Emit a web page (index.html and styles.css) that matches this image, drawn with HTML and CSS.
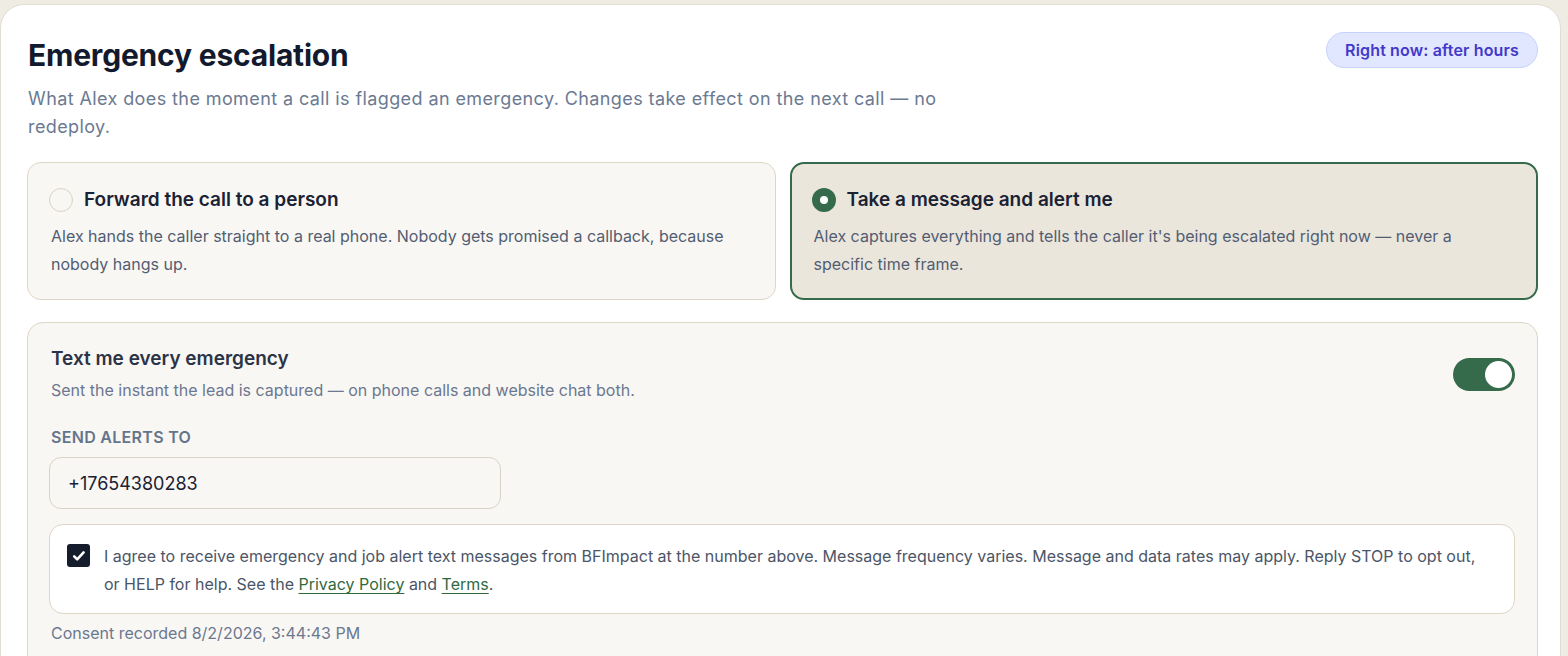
FILE: index.html
```html
<!DOCTYPE html>
<html>
<head>
    <meta charset="UTF-8">
    <link rel="stylesheet" href="styles.css">
</head>
<body>
<div class="card">
    <div class="card-head">
        <div>
            <h1>Emergency escalation</h1>
            <p class="lead">What Alex does the moment a call is flagged an emergency. Changes take effect on the next call — no redeploy.</p>
        </div>
        <span class="badge">Right now: after hours</span>
    </div>

    <div class="options">
        <div class="option">
            <div class="option-title"><span class="radio"></span>Forward the call to a person</div>
            <p>Alex hands the caller straight to a real phone. Nobody gets promised a callback, because nobody hangs up.</p>
        </div>
        <div class="option selected">
            <div class="option-title"><span class="radio"></span>Take a message and alert me</div>
            <p>Alex captures everything and tells the caller it's being escalated right now — never a specific time frame.</p>
        </div>
    </div>

    <div class="panel">
        <div class="panel-head">
            <div>
                <div class="panel-title">Text me every emergency</div>
                <div class="panel-sub">Sent the instant the lead is captured — on phone calls and website chat both.</div>
            </div>
            <span class="toggle on"><span class="knob"></span></span>
        </div>

        <label class="field-label">Send alerts to</label>
        <div class="input">+17654380283</div>

        <div class="consent">
            <span class="check">
                <svg width="16" height="16" viewBox="0 0 16 16"><path d="M3.2 8.4l3 3 6.4-7" fill="none" stroke="#fff" stroke-width="2.6" stroke-linecap="round" stroke-linejoin="round"/></svg>
            </span>
            <p>I agree to receive emergency and job alert text messages from BFImpact at the number above. Message frequency varies. Message and data rates may apply. Reply STOP to opt out, or HELP for help. See the <a href="#">Privacy Policy</a> and <a href="#">Terms</a>.</p>
        </div>
        <div class="recorded">Consent recorded 8/2/2026, 3:44:43 PM</div>
    </div>
</div>
</body>
</html>
```

FILE: styles.css
```css
* {
    box-sizing: border-box;
    font-family: Inter, "Noto Sans", sans-serif;
}

body {
    margin: 0;
    padding-top: 4px;
    background-color: #efece4;
    overflow: hidden;
}

.card {
    width: 1561px;
    height: 700px;
    background-color: #ffffff;
    border: 1px solid #e2ddd1;
    border-radius: 24px;
    padding: 28px 22px 0 26px;
}

.card-head {
    display: flex;
    justify-content: space-between;
    align-items: flex-start;
}

h1 {
    margin: 0;
    font-size: 30px;
    line-height: 44px;
    font-weight: 700;
    letter-spacing: -0.2px;
    color: #131a2d;
    padding-left: 1px;
}

.lead {
    margin: 8px 0 0 0;
    max-width: 930px;
    font-size: 18px;
    line-height: 28px;
    letter-spacing: 0.4px;
    color: #6b7a92;
    padding-left: 1px;
}

.badge {
    margin-top: -1px;
    height: 36px;
    padding: 0 18px;
    display: flex;
    align-items: center;
    border-radius: 18px;
    background-color: #e0e7ff;
    border: 1px solid #c7d2fe;
    color: #4338ca;
    font-size: 16px;
    font-weight: 600;
    letter-spacing: 0.15px;
}

.options {
    margin-top: 21px;
    display: grid;
    grid-template-columns: 1fr 1fr;
    gap: 14px;
}

.option {
    background-color: #f9f7f3;
    border: 1px solid #ddd6c6;
    border-radius: 14px;
    padding: 23px 21px 21px 21px;
}

.option.selected {
    background-color: #ebe6dc;
    border: 2px solid #356b4a;
    padding: 22px 28px 20px 20px;
}

.option-title {
    display: flex;
    align-items: center;
    gap: 11px;
    font-size: 19px;
    line-height: 28px;
    font-weight: 600;
    color: #1a2233;
}

.radio {
    width: 24px;
    height: 24px;
    border-radius: 50%;
    border: 1px solid #d9d2c2;
    background-color: #f9f7f3;
    flex-shrink: 0;
}

.selected .radio {
    border: 8px solid #356b4a;
    background-color: #ffffff;
}

.option p {
    margin: 8px 0 0 2px;
    font-size: 16px;
    line-height: 28px;
    color: #525d72;
}

.panel {
    margin-top: 22px;
    background-color: #f9f7f3;
    border: 1px solid #ddd6c6;
    border-radius: 16px;
    padding: 22px 22px 40px 21px;
}

.panel-head {
    display: flex;
    justify-content: space-between;
    align-items: center;
    padding-left: 2px;
}

.panel-title {
    font-size: 19px;
    line-height: 28px;
    font-weight: 600;
    color: #2b3446;
}

.panel-sub {
    margin-top: 3px;
    font-size: 16px;
    line-height: 28px;
    color: #6b7890;
}

.toggle {
    width: 62px;
    height: 33px;
    border-radius: 17px;
    background-color: #356b4a;
    padding: 3px;
    display: flex;
}

.toggle.on {
    justify-content: flex-end;
}

.knob {
    width: 27px;
    height: 27px;
    border-radius: 50%;
    background-color: #ffffff;
}

.field-label {
    display: block;
    margin-top: 21px;
    padding-left: 2px;
    font-size: 16px;
    line-height: 24px;
    font-weight: 600;
    text-transform: uppercase;
    letter-spacing: 0.3px;
    color: #64748b;
}

.input {
    margin-top: 8px;
    width: 452px;
    height: 52px;
    border: 1px solid #d9d3c4;
    border-radius: 12px;
    background-color: #f9f7f3;
    padding-left: 18px;
    display: flex;
    align-items: center;
    font-size: 18px;
    color: #1a2233;
}

.consent {
    margin-top: 15px;
    background-color: #ffffff;
    border: 1px solid #ddd6c6;
    border-radius: 14px;
    padding: 17px 30px 15px 17px;
    display: flex;
    align-items: flex-start;
    gap: 14px;
}

.check {
    margin-top: 2px;
    width: 23px;
    height: 23px;
    border-radius: 3px;
    background-color: #151c2b;
    display: flex;
    align-items: center;
    justify-content: center;
    flex-shrink: 0;
}

.consent p {
    margin: 0;
    font-size: 16px;
    line-height: 28px;
    color: #4b5567;
}

.consent a {
    color: #2f6a3f;
    text-decoration: underline;
    text-underline-offset: 3px;
}

.recorded {
    margin-top: 7px;
    padding-left: 2px;
    font-size: 16px;
    line-height: 24px;
    color: #6b7890;
}
```
